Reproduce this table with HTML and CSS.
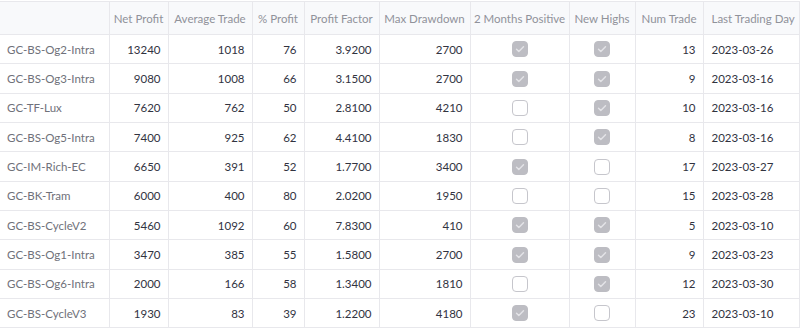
FILE: index.html
```html
<!DOCTYPE html>
<html lang="en">
<head>
    <meta charset="UTF-8">
    <meta name="viewport" content="width=device-width, initial-scale=1.0">
    <title>Strategies</title>
    <link rel="stylesheet" href="styles.css">
</head>
<body>
    <div class="grid-wrap">
        <table class="grid">
            <colgroup>
                <col style="width:109px">
                <col style="width:59px">
                <col style="width:84px">
                <col style="width:52px">
                <col style="width:75px">
                <col style="width:91px">
                <col style="width:99px">
                <col style="width:66px">
                <col style="width:68px">
                <col style="width:96px">
            </colgroup>
            <thead>
                <tr>
                    <th></th>
                    <th>Net Profit</th>
                    <th>Average Trade</th>
                    <th>% Profit</th>
                    <th>Profit Factor</th>
                    <th>Max Drawdown</th>
                    <th>2 Months Positive</th>
                    <th>New Highs</th>
                    <th>Num Trade</th>
                    <th class="left">Last Trading Day</th>
                </tr>
            </thead>
            <tbody id="rows"></tbody>
        </table>
    </div>

    <script>
        // name, net profit, avg trade, % profit, profit factor, max dd, 2m positive, new highs, trades, last day
        const data = [
            ['GC-BS-Og2-Intra', 13240, 1018, 76, '3.9200', 2700, true, true, 13, '2023-03-26'],
            ['GC-BS-Og3-Intra', 9080, 1008, 66, '3.1500', 2700, true, true, 9, '2023-03-16'],
            ['GC-TF-Lux', 7620, 762, 50, '2.8100', 4210, false, true, 10, '2023-03-16'],
            ['GC-BS-Og5-Intra', 7400, 925, 62, '4.4100', 1830, false, true, 8, '2023-03-16'],
            ['GC-IM-Rich-EC', 6650, 391, 52, '1.7700', 3400, true, false, 17, '2023-03-27'],
            ['GC-BK-Tram', 6000, 400, 80, '2.0200', 1950, false, false, 15, '2023-03-28'],
            ['GC-BS-CycleV2', 5460, 1092, 60, '7.8300', 410, true, true, 5, '2023-03-10'],
            ['GC-BS-Og1-Intra', 3470, 385, 55, '1.5800', 2700, true, true, 9, '2023-03-23'],
            ['GC-BS-Og6-Intra', 2000, 166, 58, '1.3400', 1810, false, true, 12, '2023-03-30'],
            ['GC-BS-CycleV3', 1930, 83, 39, '1.2200', 4180, true, false, 23, '2023-03-10']
        ];

        function checkbox(on) {
            if (!on) return '<span class="box"></span>';
            return '<span class="box on"><svg viewBox="0 0 16 16" width="16" height="16"><path d="M4.5 8.2l2.3 2.3 4.7-4.8" fill="none" stroke="#e4e4e8" stroke-width="1.4" stroke-linecap="round" stroke-linejoin="round"/></svg></span>';
        }

        const body = document.getElementById('rows');
        data.forEach(row => {
            const tr = document.createElement('tr');
            tr.innerHTML =
                `<td class="name">${row[0]}</td>` +
                row.slice(1, 6).map(v => `<td>${v}</td>`).join('') +
                `<td class="center">${checkbox(row[6])}</td>` +
                `<td class="center">${checkbox(row[7])}</td>` +
                `<td>${row[8]}</td>` +
                `<td class="left">${row[9]}</td>`;
            body.appendChild(tr);
        });
    </script>
</body>
</html>
```

FILE: styles.css
```css
:root {
    --line-color: #e8e8ec;
    --header-bg: #f8f9fb;
    --header-text: #90929a;
    --text-color: #31333f;
    --index-text: #6f717a;
}
body {
    margin: 0;
    padding: 0;
    background: #fff;
    font-family: Lato, 'Noto Sans', sans-serif;
    font-size: 11.5px;
    color: var(--text-color);
}
.grid-wrap {
    width: 800px;
    padding-top: 1px;
}
.grid {
    table-layout: fixed;
    border-collapse: collapse;
    width: 799px;
}
.grid th,
.grid td {
    border: 1px solid var(--line-color);
    padding: 0 7px 0 7px;
    text-align: right;
    white-space: nowrap;
    overflow: hidden;
}
.grid tr > :first-child {
    border-left: none;
}
.grid th {
    height: 32px;
    padding: 0 3px;
    background: var(--header-bg);
    color: var(--header-text);
    font-weight: normal;
    text-align: center;
}
.grid td {
    height: 28.35px;
}
.grid th.left,
.grid td.left {
    text-align: left;
    padding-left: 8px;
}
.grid td.name {
    text-align: left;
    color: var(--index-text);
}
.grid td.center {
    text-align: center;
}
.box {
    display: inline-block;
    width: 16px;
    height: 16px;
    box-sizing: border-box;
    border: 1px solid #c6c6cc;
    border-radius: 4px;
    background: #fff;
    vertical-align: middle;
}
.box.on {
    border-color: #bdbdc3;
    background: #bdbdc3;
}
.box svg {
    display: block;
    margin: -1px;
}
```
